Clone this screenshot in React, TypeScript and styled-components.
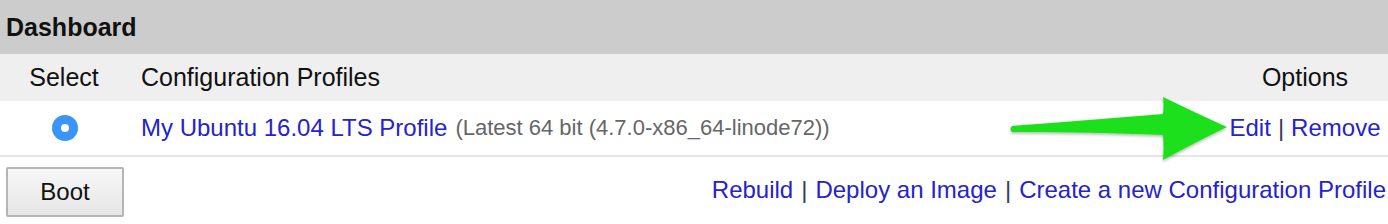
import React from 'react';
import styled, { createGlobalStyle } from 'styled-components';

const GlobalStyle = createGlobalStyle`
  html, body {
    margin: 0;
    padding: 0;
    background: #ffffff;
  }
  body {
    font-family: "Liberation Sans", Arial, Helvetica, sans-serif;
    color: #111;
  }
`;

const Page = styled.div`
  position: relative;
  width: 1388px;
  height: 224px;
  overflow: hidden;
`;

const TitleBar = styled.div`
  height: 54px;
  background: #cccccc;
  display: flex;
  align-items: center;
  padding-left: 6px;
  box-sizing: border-box;
  font-size: 25px;
  font-weight: bold;
  color: #111;
`;

const Row = styled.div<{ $head?: boolean }>`
  display: grid;
  grid-template-columns: 128px 1fr 166px;
  align-items: center;
  height: ${({ $head }) => ($head ? '47px' : '54px')};
  background: ${({ $head }) => ($head ? '#efefef' : '#ffffff')};
  border-bottom: ${({ $head }) => ($head ? 'none' : '2px solid #e6e6e6')};
  font-size: ${({ $head }) => ($head ? '25px' : '24px')};
`;

const Cell = styled.div<{ $align?: 'left' | 'center' | 'right' }>`
  display: flex;
  align-items: center;
  justify-content: ${({ $align }) =>
    $align === 'center' ? 'center' : $align === 'right' ? 'flex-end' : 'flex-start'};
  padding-left: ${({ $align }) => ($align === 'left' ? '13px' : '0')};
  white-space: nowrap;
`;

const Radio = styled.span`
  width: 26px;
  height: 26px;
  border-radius: 50%;
  background: #3a95f7;
  display: flex;
  align-items: center;
  justify-content: center;
  margin-left: 2px;
  &::after {
    content: '';
    width: 8px;
    height: 8px;
    border-radius: 50%;
    background: #fff;
  }
`;

const Link = styled.a`
  color: #2523c9;
  text-decoration: none;
  cursor: pointer;
`;

const Muted = styled.span`
  color: #666;
  font-size: 22px;
  margin-left: 8px;
`;

const Sep = styled.span<{ $wide?: boolean }>`
  color: #3a3a5a;
  margin: 0 ${({ $wide }) => ($wide ? '8px' : '7px')};
`;

const Footer = styled.div`
  display: flex;
  justify-content: space-between;
  align-items: center;
  padding: 10px 2px 0 6px;
  font-size: 24px;
`;

const Button = styled.button`
  width: 118px;
  height: 50px;
  font-family: inherit;
  font-size: 24px;
  color: #111;
  background: linear-gradient(#f7f7f7, #e6e6e6);
  border: 2px solid #b5b5b5;
  border-radius: 2px;
  padding: 0;
`;

const FooterLinks = styled.div`
  margin-top: -4px;
  white-space: nowrap;
`;

const Arrow = styled.svg`
  position: absolute;
  left: 1000px;
  top: 90px;
  width: 240px;
  height: 80px;
  pointer-events: none;
`;

export default function App() {
  return (
    <Page>
      <GlobalStyle />
      <TitleBar>Dashboard</TitleBar>
      <Row $head>
        <Cell $align="center">Select</Cell>
        <Cell $align="left">Configuration Profiles</Cell>
        <Cell $align="center">Options</Cell>
      </Row>
      <Row>
        <Cell $align="center">
          <Radio />
        </Cell>
        <Cell $align="left">
          <Link>My Ubuntu 16.04 LTS Profile</Link>
          <Muted>(Latest 64 bit (4.7.0-x86_64-linode72))</Muted>
        </Cell>
        <Cell $align="center">
          <Link>Edit</Link>
          <Sep>|</Sep>
          <Link>Remove</Link>
        </Cell>
      </Row>
      <Footer>
        <Button>Boot</Button>
        <FooterLinks>
          <Link>Rebuild</Link>
          <Sep $wide>|</Sep>
          <Link>Deploy an Image</Link>
          <Sep $wide>|</Sep>
          <Link>Create a new Configuration Profile</Link>
        </FooterLinks>
      </Footer>
      <Arrow viewBox="0 0 240 80">
        <defs>
          <filter id="sh" x="-10%" y="-20%" width="120%" height="140%">
            <feDropShadow dx="0" dy="1.5" stdDeviation="1.5" floodColor="#000" floodOpacity="0.3" />
          </filter>
        </defs>
        <path
          d="M12 36 Q90 30 163 24 Q164 15 163 7 Q198 24 227 37 Q196 52 163 70 Q164 57 163 45 Q90 42 12 42 Q9 39 12 36 Z"
          fill="#1fe01f"
          filter="url(#sh)"
        />
      </Arrow>
    </Page>
  );
}
